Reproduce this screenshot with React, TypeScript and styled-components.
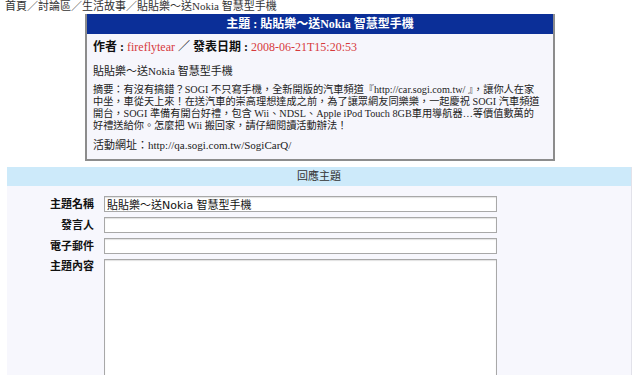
import styled, { createGlobalStyle } from 'styled-components'

const GlobalStyle = createGlobalStyle`
  html, body {
    margin: 0;
    padding: 0;
    background: #fff;
  }

  body {
    font-family: 'Liberation Serif', 'Noto Sans CJK TC', serif;
    color: #222;
  }
`

const Page = styled.div`
  width: 640px;
  height: 375px;
  overflow: hidden;
`

const Breadcrumb = styled.nav`
  padding-left: 5px;
  font-size: 11px;
  line-height: 13px;
  color: #333;
`

const Post = styled.article`
  width: 466px;
  margin: 1px auto 0;
  border: 2px solid #8c8c8c;
  border-top: 0;
  background: #f6f6fc;
`

const PostHeader = styled.header`
  height: 20px;
  background: #0b2f98;
  color: #fff;
  font-size: 12px;
  font-weight: bold;
  line-height: 20px;
  text-align: center;
`

const PostBody = styled.div`
  padding: 6px 8px 8px 6px;
  font-size: 11px;
  line-height: 12px;
`

const Meta = styled.p`
  margin: 0;
  font-size: 12px;
  line-height: 14px;
`

const MetaLabel = styled.b`
  color: #111;
`

const Red = styled.span`
  color: #d63a3c;
`

const Para = styled.p<{ $gap: number }>`
  margin: ${(p) => p.$gap}px 0 0;
  white-space: nowrap;
`

const Summary = styled(Para)`
  font-size: 10.2px;
`

const Reply = styled.section`
  margin: 6px 8px 0 7px;
  border-right: 1px solid #e2e2ea;
  background: #f7f7fd;
  height: 220px;
`

const ReplyHeader = styled.header`
  height: 19px;
  background: #cdeafa;
  font-size: 11px;
  line-height: 19px;
  text-align: center;
  color: #333;
`

const Form = styled.form`
  display: grid;
  grid-template-columns: 87px 393px;
  column-gap: 10px;
  row-gap: 5px;
  padding-top: 10px;
`

const Label = styled.label<{ $top?: boolean }>`
  align-self: ${(p) => (p.$top ? 'start' : 'center')};
  text-align: right;
  font-size: 11px;
  font-weight: bold;
  line-height: 14px;
  color: #111;
`

const Input = styled.input`
  box-sizing: border-box;
  height: 16px;
  width: 100%;
  margin: 0;
  padding: 0 2px;
  border: 1px solid #a8a8a8;
  box-shadow: inset 0 1px 1px rgba(0, 0, 0, 0.12);
  background: #fff;
  font-family: 'DejaVu Sans', 'Noto Sans CJK TC', sans-serif;
  font-size: 11px;
  color: #111;
`

const TextArea = styled.textarea`
  box-sizing: border-box;
  height: 130px;
  width: 100%;
  margin: 0;
  border: 1px solid #a8a8a8;
  box-shadow: inset 0 1px 1px rgba(0, 0, 0, 0.12);
  background: #fff;
  resize: none;
`

const App = () => (
  <Page>
    <GlobalStyle />
    <Breadcrumb>首頁／討論區／生活故事／貼貼樂～送Nokia 智慧型手機</Breadcrumb>
    <Post>
      <PostHeader>主題 : 貼貼樂～送Nokia 智慧型手機</PostHeader>
      <PostBody>
        <Meta>
          <MetaLabel>作者 : </MetaLabel>
          <Red>fireflytear</Red>
          <MetaLabel> ／ 發表日期 : </MetaLabel>
          <Red>2008-06-21T15:20:53</Red>
        </Meta>
        <Para $gap={11}>貼貼樂～送Nokia 智慧型手機</Para>
        <Summary $gap={7}>
          摘要：有沒有搞錯？SOGI 不只寫手機，全新開版的汽車頻道『http://car.sogi.com.tw/ 』，讓你人在家
          <br />
          中坐，車從天上來！在送汽車的崇高理想達成之前，為了讓眾網友同樂樂，一起慶祝 SOGI 汽車頻道
          <br />
          開台，SOGI 準備有開台好禮，包含 Wii、NDSL、Apple iPod Touch 8GB車用導航器…等價值數萬的
          <br />
          好禮送給你。怎麼把 Wii 搬回家，請仔細閱讀活動辦法！
        </Summary>
        <Para $gap={7}>活動網址：http://qa.sogi.com.tw/SogiCarQ/</Para>
      </PostBody>
    </Post>
    <Reply>
      <ReplyHeader>回應主題</ReplyHeader>
      <Form>
        <Label>主題名稱</Label>
        <Input defaultValue="貼貼樂～送Nokia 智慧型手機" />
        <Label>發言人</Label>
        <Input />
        <Label>電子郵件</Label>
        <Input />
        <Label $top>主題內容</Label>
        <TextArea />
      </Form>
    </Reply>
  </Page>
)

export default App
